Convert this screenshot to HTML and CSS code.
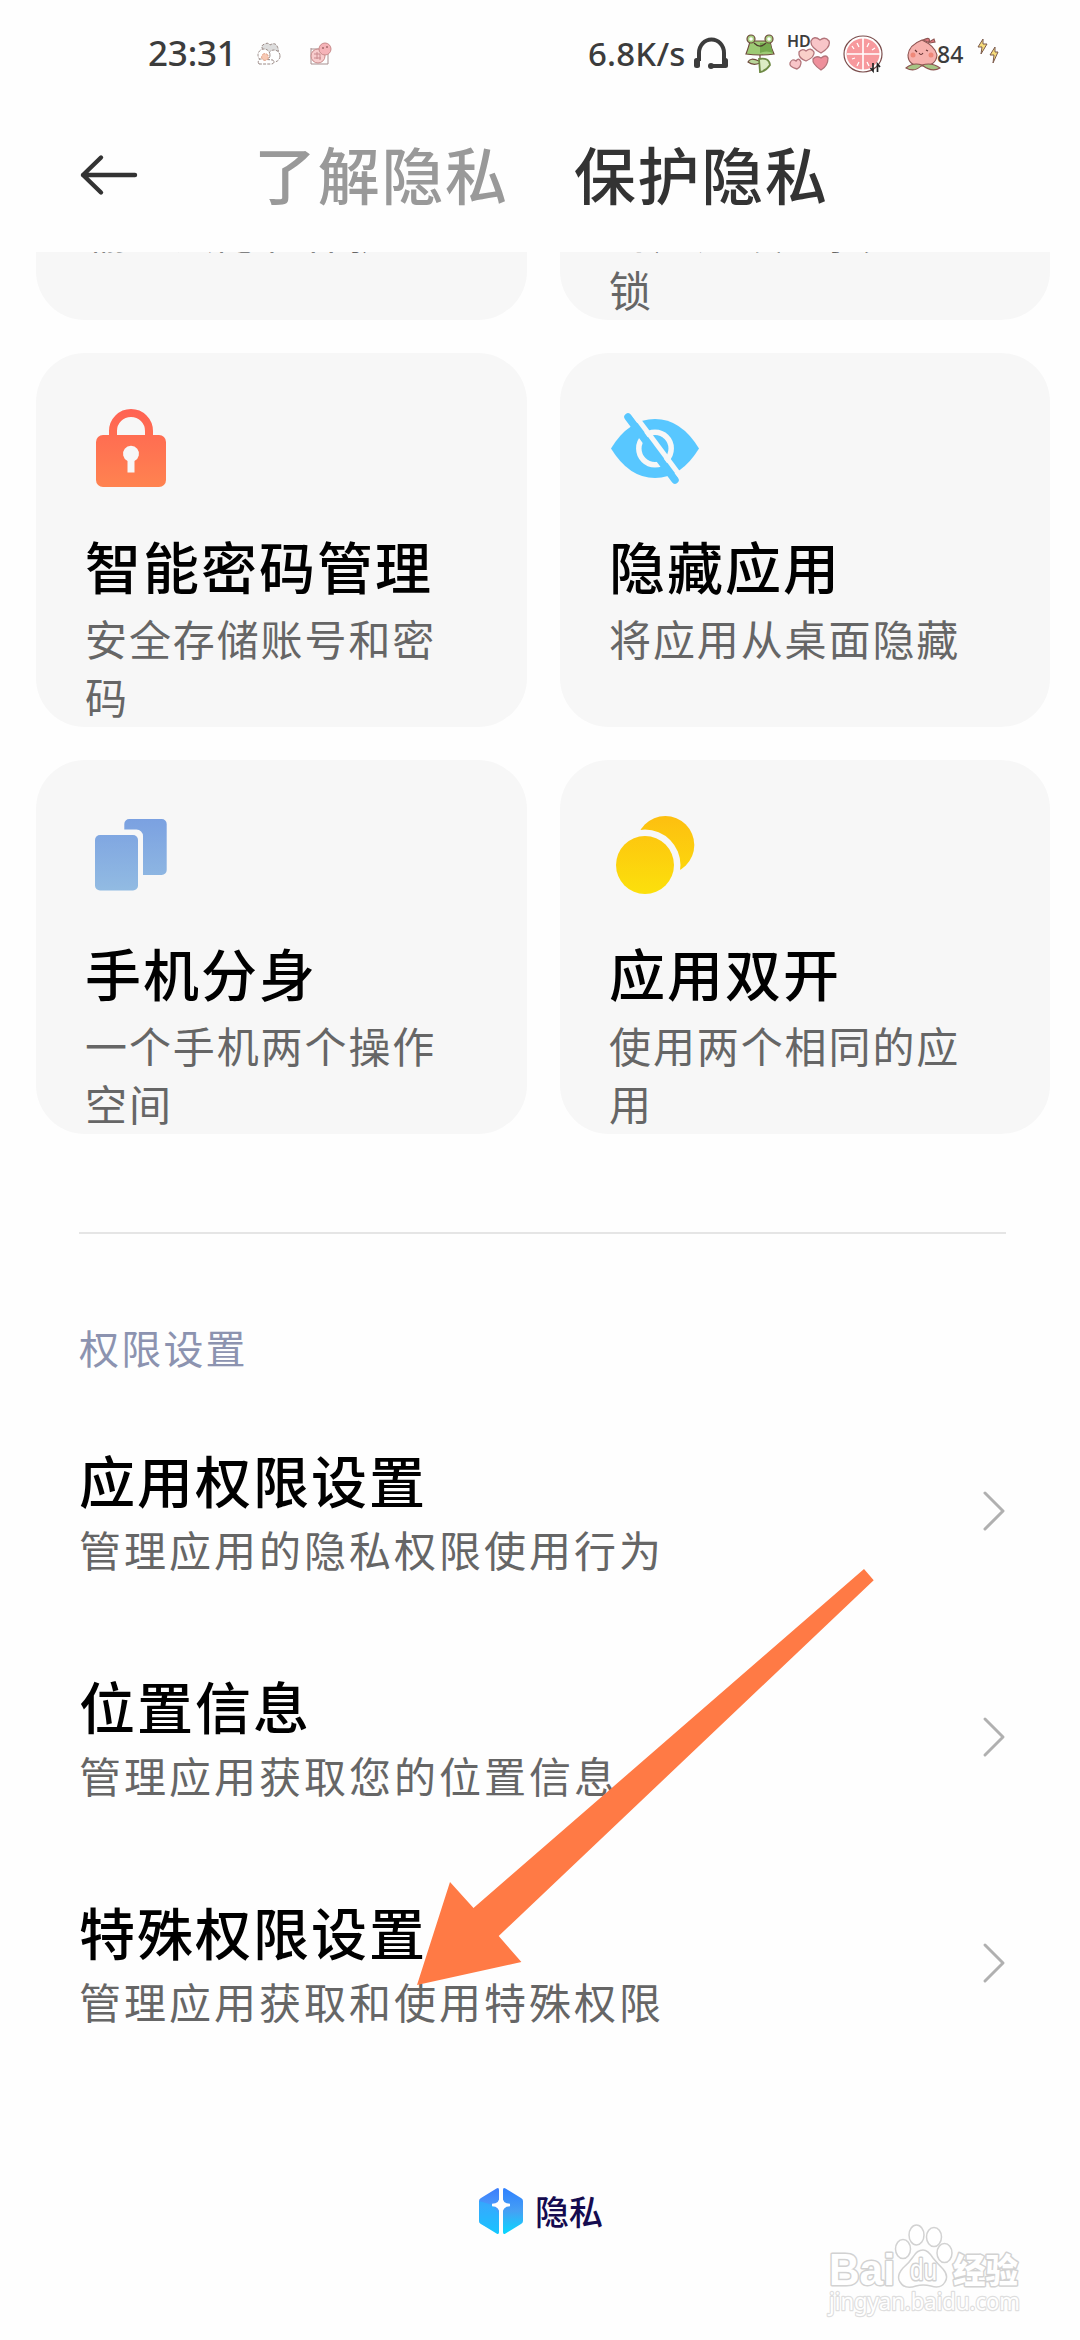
FILE: index.html
```html
<!DOCTYPE html>
<html lang="zh-CN">
<head>
<meta charset="utf-8">
<title>保护隐私</title>
<link rel="stylesheet" href="styles.css">
</head>
<body>
<div class="screen">
  <div class="statusbar">
    <span class="clock">23:31</span>
    <svg class="st-bear" width="24" height="24" viewBox="0 0 24 24" fill="#fff" stroke="#9a8a86" stroke-width="1" stroke-dasharray="3 1.2">
      <path d="M6 8Q3 3 8 2Q11 0 13 3Q18 0 20 4Q23 9 19 14L8 9Z" fill="#ddd"/>
      <circle cx="17" cy="14" r="6"/><circle cx="7" cy="13" r="6"/>
      <path d="M2 22Q0 19 3 17L16 18Q18 22 14 22Z"/>
      <circle cx="8" cy="15" r="3.4" fill="#f7c9b4" stroke="#e0a58d"/>
    </svg>
    <svg class="st-piggy" width="24" height="24" viewBox="0 0 24 24" fill="none" stroke="#c98b8b">
      <path d="M2 6V22H19V12M2 7H10" stroke="#a89090"/>
      <circle cx="9" cy="14" r="7" fill="#f8cccd"/><path d="M5 12H11M8 10V17M5 16H12M11 12V18" stroke="#c98a8e"/>
      <circle cx="16" cy="7" r="6" fill="#f5b3b8"/><path d="M13 6h2M17 5h2" stroke="#7d4545"/>
    </svg>
    <span class="speed">6.8K/s</span>
    <svg class="st-phones" width="36" height="34" viewBox="0 0 36 34" fill="none" stroke="#3c3c3c" stroke-width="4">
      <path d="M6 24V16a12.5 13.5 0 0 1 25 0V24M31 29H19"/>
      <rect x="1" y="21" width="6" height="10" rx="2.5" fill="#3c3c3c" stroke="none"/><rect x="29" y="21" width="6" height="10" rx="2.5" fill="#3c3c3c" stroke="none"/>
      <circle cx="18" cy="29" r="3" fill="#3c3c3c" stroke="none"/>
    </svg>
    <svg class="st-frog" width="31" height="40" viewBox="0 0 31 40" stroke="#6e4a3c" stroke-width="1.2">
      <path d="M15 19V37M14 27Q5 23 3 28Q8 32 15 29" fill="#b9d69a"/>
      <path d="M14 25Q24 23 25 31Q21 37 15 38Z" fill="#dcecc4" stroke="#6e8a45" stroke-width="1.8"/>
      <path d="M1 20Q4 12 5 7H25Q26 14 29 20Q15 22 1 20Z" fill="#9dca74"/>
      <path d="M15 9H25L28 19Q22 16 15 19Z" fill="#76a94e" stroke="none"/>
      <circle cx="6" cy="5" r="4" fill="#a9d182"/><circle cx="24" cy="5" r="4" fill="#a9d182"/>
      <circle cx="6" cy="5" r="1.8" fill="#fff" stroke="none"/><circle cx="24" cy="5" r="1.8" fill="#fff" stroke="none"/>
      <path d="M9 9Q15 15 21 9" fill="none" stroke="#4c3a2c"/>
    </svg>
    <span class="signal">
      <b class="hd">HD</b>
      <svg width="44" height="36" viewBox="0 0 44 36" fill="#f8c5c8" stroke="#b2747a" stroke-width="1.3">
        <path d="M33 17Q22 11 23 5Q26 -1 32 4Q37 0 41 5Q43 11 33 17Z"/>
        <path d="M18 25Q10 22 11 16Q14 12 18 15Q23 11 26 16Q27 21 18 25Z" fill="#f9d0c9"/>
        <path d="M9 33Q1 31 2 27Q4 22 8 25Q11 21 13 26Q13 31 9 33Z"/>
        <path d="M33 34Q24 28 25 23Q28 19 33 22Q38 18 40 22Q40 30 33 34Z" fill="#ee8f9b"/>
      </svg>
    </span>
    <svg class="st-fruit" width="41" height="39" viewBox="0 0 41 39">
      <ellipse cx="20" cy="19" rx="19" ry="18" fill="#fff" stroke="#7b4d4c" stroke-width="1.2"/>
      <ellipse cx="20" cy="19" rx="16.5" ry="15.5" fill="#f7999d"/>
      <path d="M20 3V35M4 19H37" stroke="#fff" stroke-width="1.6"/>
      <path d="M14 8l2 4M9 11l2 3M26 8l-2 4M32 13l-3 2M9 24l3-1M14 31l2-4M26 31l-2-4" stroke="#fff" stroke-width="1.3"/>
      <path d="M30 28V36L27.500 33M34.500 37V29L37 32" stroke="#222" stroke-width="1.7" fill="none"/>
    </svg>
    <span class="battery">
      <svg width="36" height="35" viewBox="0 0 36 35" stroke="#8d5451" stroke-width="1.1">
        <path d="M18 3Q26 -1 24 5L29 2L30 5L25 6Z" fill="#df7980"/>
        <path d="M17 29Q3 29 3 18Q4 8 17 3Q30 9 32 18Q31 29 17 29Z" fill="#f6b1ad"/>
        <path d="M17 28Q8 25 1 31Q10 36 17 28Q27 36 35 31Q27 25 17 28Z" fill="#a7c585"/>
        <circle cx="8" cy="18" r="2.5" fill="#ee8879" stroke="none"/><circle cx="26" cy="18" r="2.5" fill="#ee8879" stroke="none"/>
        <path d="M10 13l2 2M21 13l2 1M14 16q2 3 4 0" stroke="#633" fill="none"/>
      </svg>
      <b class="pct">84</b>
    </span>
    <svg class="st-bolt" width="22" height="26" viewBox="0 0 22 26" fill="#f6dc7b" stroke="#7b5a4e" stroke-width="1">
      <path d="M6 1L1 9H5L4 16L10 6H6Z"/><path d="M18 9L13 17H17L16 25L21 14H18Z"/>
    </svg>
  </div>

  <header class="topbar">
    <svg class="back" width="60" height="42" viewBox="0 0 60 42" fill="none" stroke="#333" stroke-width="4.4" stroke-linecap="round" stroke-linejoin="round"><path d="M56 21H4M22 3.500L4 21L22 38.500"/></svg>
    <nav class="tabs"><span class="tab">了解隐私</span><span class="tab tab-active">保护隐私</span></nav>
  </header>

  <main>
    <section class="grid">
      <div class="card card-cut"><p class="card-sub">输入法隐私保护<br>&nbsp;</p></div>
      <div class="card card-cut"><p class="card-sub">为应用设置独立的锁</p></div>

      <div class="card">
        <svg class="icon" viewBox="0 0 100 100">
          <defs><linearGradient id="lock" x1="0" y1="12" x2="0" y2="90" gradientUnits="userSpaceOnUse"><stop stop-color="#ff6253"/><stop offset="1" stop-color="#ff8350"/></linearGradient></defs>
          <path d="M28 42V34a18 18 0 0 1 36 0V42" fill="none" stroke="url(#lock)" stroke-width="8"/>
          <rect x="11" y="38" width="70" height="52" rx="7" fill="url(#lock)"/>
          <path d="M42.500 64a8 8 0 1 1 7 0V75.500H42.500Z" fill="#f7f7f7"/>
        </svg>
        <h2 class="card-title">智能密码管理</h2>
        <p class="card-sub">安全存储账号和密码</p>
      </div>
      <div class="card">
        <svg class="icon" viewBox="0 0 100 100">
          <path d="M2 51.500Q20 22 46 22T90 51.500Q72 81 46 81T2 51.500Z" fill="#58c7ff"/>
          <circle cx="46" cy="51.500" r="16.200" fill="none" stroke="#f7f7f7" stroke-width="5.500"/>
          <path d="M19 20L66 83" stroke="#58c7ff" stroke-width="7.500" stroke-linecap="round"/>
          <path d="M22 13L73 81.300" stroke="#f7f7f7" stroke-width="5"/>
        </svg>
        <h2 class="card-title">隐藏应用</h2>
        <p class="card-sub">将应用从桌面隐藏</p>
      </div>

      <div class="card">
        <svg class="icon" viewBox="0 0 100 100">
          <defs><linearGradient id="sheet" x1="0" y1="15" x2="0" y2="87" gradientUnits="userSpaceOnUse"><stop stop-color="#7ba1e1"/><stop offset="1" stop-color="#92bbe2"/></linearGradient></defs>
          <rect x="10" y="31" width="43" height="55.500" rx="5" fill="url(#sheet)"/>
          <path d="M39.300 25.500V20a5 5 0 0 1 5-5H76.700a5 5 0 0 1 5 5V66a5 5 0 0 1-5 5H58V32a6.500 6.500 0 0 0-6.500-6.500Z" fill="url(#sheet)"/>
        </svg>
        <h2 class="card-title">手机分身</h2>
        <p class="card-sub">一个手机两个操作空间</p>
      </div>
      <div class="card">
        <svg class="icon" viewBox="0 0 100 100">
          <defs><linearGradient id="coin" x1="0" y1="12" x2="0" y2="90" gradientUnits="userSpaceOnUse"><stop stop-color="#fdbf10"/><stop offset="1" stop-color="#fce00c"/></linearGradient></defs>
          <circle cx="56.300" cy="41" r="29" fill="url(#coin)"/>
          <circle cx="36" cy="61" r="35.500" fill="#f7f7f7"/>
          <circle cx="36" cy="61" r="29" fill="url(#coin)"/>
        </svg>
        <h2 class="card-title">应用双开</h2>
        <p class="card-sub">使用两个相同的应用</p>
      </div>
    </section>

    <section class="settings">
      <h3 class="label">权限设置</h3>
      <div class="row">
        <div><h2 class="row-title">应用权限设置</h2><p class="row-sub">管理应用的隐私权限使用行为</p></div>
        <svg class="chev" viewBox="0 0 24 42"><path d="M3 3L21 21L3 39"/></svg>
      </div>
      <div class="row">
        <div><h2 class="row-title">位置信息</h2><p class="row-sub">管理应用获取您的位置信息</p></div>
        <svg class="chev" viewBox="0 0 24 42"><path d="M3 3L21 21L3 39"/></svg>
      </div>
      <div class="row">
        <div><h2 class="row-title">特殊权限设置</h2><p class="row-sub">管理应用获取和使用特殊权限</p></div>
        <svg class="chev" viewBox="0 0 24 42"><path d="M3 3L21 21L3 39"/></svg>
      </div>
    </section>
  </main>

  <footer class="brand">
    <svg width="44" height="48" viewBox="0 0 44 48">
      <defs>
        <linearGradient id="hex" x1="0" y1="0" x2="0" y2="1"><stop stop-color="#3d7dfa"/><stop offset=".4" stop-color="#4a9afb"/><stop offset="1" stop-color="#10ccff"/></linearGradient>
        <linearGradient id="hexr" x1="0" y1="0" x2="0" y2="1"><stop stop-color="#2f80ff"/><stop offset=".5" stop-color="#46a0f4"/><stop offset="1" stop-color="#08d8ff"/></linearGradient>
      </defs>
      <path d="M17.500 1.500Q20 0 20 3V45Q20 48 17.500 46.500L2 37Q0 36 0 34V14Q0 12 2 11Z" fill="url(#hex)"/>
      <path d="M26.500 1.500Q24 0 24 3V45Q24 48 26.500 46.500L42 37Q44 36 44 34V14Q44 12 42 11Z" fill="url(#hexr)"/>
      <path d="M0 14L14 18L20 28V46L2 37Q0 36 0 34Z" fill="#1fbcff" opacity=".5"/>
      <path d="M22 9Q22 18 31 18Q22 18 22 28Q22 18 13 18Q22 18 22 9Z" fill="#fff" stroke="#fff" stroke-width="2.500"/>
    </svg>
    <span>隐私</span>
  </footer>

  <svg class="pointer" width="457" height="416" viewBox="0 0 457 416"><path d="M447 0L456.700 11.300L81.700 367L104.400 393L0 416L33 313L56.500 339Z" fill="#ff7a45"/></svg>

  <svg class="watermark" width="210" height="100" viewBox="0 0 210 100">
    <g class="wm-ink">
      <text class="wm-bai" x="3" y="61" textLength="66" lengthAdjust="spacingAndGlyphs">Bai</text>
      <path d="M97 26Q102 26 107 34Q111 39 117 45Q123 52 119 58Q115 65 105 62Q97 60 90 62Q79 66 74 58Q70 52 77 44Q83 39 87 33Q91 26 97 26Z"/>
      <ellipse cx="77" cy="25" rx="7.500" ry="9.500"/><ellipse cx="90.500" cy="11" rx="7.500" ry="10"/><ellipse cx="108" cy="13" rx="7.500" ry="9.500"/><ellipse cx="118.500" cy="29" rx="7.500" ry="9.500"/>
      <text class="wm-du" x="84" y="56" textLength="27" lengthAdjust="spacingAndGlyphs">du</text>
      <text class="wm-cjk" x="127" y="59" textLength="65" lengthAdjust="spacingAndGlyphs">经验</text>
      <text class="wm-url" x="3" y="86" textLength="191" lengthAdjust="spacingAndGlyphs">jingyan.baidu.com</text>
    </g>
  </svg>
</div>
</body>
</html>
```
FILE: styles.css
```css
* { box-sizing: border-box; margin: 0; padding: 0; }
body { background: #fdfdfd; }
svg { display: block; flex: none; }
.screen {
  position: relative;
  width: 1080px;
  height: 2340px;
  overflow: hidden;
  display: flex;
  flex-direction: column;
  background: #fefefe;
  color: #000;
  font-family: "Noto Sans CJK SC", "Noto Sans", sans-serif;
}

.statusbar {
  height: 108px;
  padding-left: 148px;
  display: flex;
  align-items: center;
  color: #3c3c3c;
  font-family: "Noto Sans", "Open Sans", sans-serif;
  font-weight: 500;
}
.clock { width: 88px; font-size: 35px; line-height: 48px; padding-bottom: 2px; white-space: nowrap; letter-spacing: -.2px; }
.st-bear { margin-left: 21px; }
.st-piggy { margin-left: 28px; }
.speed { width: 100px; margin-left: 255px; font-size: 33px; line-height: 48px; padding-bottom: 1px; white-space: nowrap; letter-spacing: .2px; }
.st-phones { margin-left: 5px; }
.st-frog { margin-left: 16px; }
.signal { position: relative; margin-left: 12px; }
.hd { position: absolute; left: -1px; top: -4px; font-size: 16px; line-height: 18px; font-weight: 600; z-index: 1; }
.st-fruit { margin-left: 11px; }
.battery { margin-left: 21px; display: flex; align-items: center; }
.pct { font-size: 23px; line-height: 30px; font-weight: 500; margin-left: -4px; }
.st-bolt { margin-left: 14px; margin-top: -6px; }

.topbar {
  height: 144px;
  padding-left: 79px;
  display: flex;
  align-items: flex-start;
}
.back { margin-top: 46px; }
.tabs { display: flex; gap: 65px; margin-left: 115px; padding-top: 30px; }
.tab { font-size: 62px; line-height: 70px; letter-spacing: 1.700px; color: #999; font-weight: 500; white-space: nowrap; }
.tab-active { color: #333; }

.grid {
  display: grid;
  grid-template-columns: 491px 490px;
  grid-template-rows: 68px 374px 374px;
  gap: 33px;
  padding-left: 36px;
}
.card {
  padding: 44px 49px 0;
  border-radius: 49px;
  background: #f7f7f7;
  overflow: hidden;
}
.card-cut {
  display: flex;
  flex-direction: column;
  justify-content: flex-end;
  padding: 0 49px 2px;
  border-radius: 0 0 49px 49px;
}
.icon { width: 100px; height: 100px; }
.card-title, .row-title {
  font-size: 56px;
  line-height: 76px;
  font-weight: 500;
  letter-spacing: 2px;
  white-space: nowrap;
}
.card-title { margin-top: 30px; margin-bottom: 6px; }
.card-sub {
  width: 360px;
  font-size: 42px;
  line-height: 58px;
  letter-spacing: 1.900px;
  color: #666;
}

.settings { margin: 98px 74px 0 79px; border-top: 2px solid #e5e5e5; }
.label {
  margin-top: 84px;
  font-size: 40px;
  line-height: 58px;
  letter-spacing: 2.200px;
  font-weight: 400;
  color: #8c93b0;
}
.row {
  height: 226px;
  display: flex;
  align-items: center;
  justify-content: space-between;
}
.row:first-of-type { margin-top: 22px; }
.row-title { margin-top: -3px; margin-bottom: 3px; }
.row-sub { font-size: 42px; line-height: 58px; letter-spacing: 3px; color: #666; white-space: nowrap; }
.chev { width: 24px; height: 42px; fill: none; stroke: #b0b0b0; stroke-width: 3; stroke-linecap: round; stroke-linejoin: round; }

.brand {
  margin-top: 111px;
  padding-left: 479px;
  display: flex;
  align-items: center;
  gap: 12px;
  font-size: 34px;
  line-height: 48px;
  font-weight: 500;
  color: #150b50;
}

.pointer { position: absolute; left: 417px; top: 1569px; }
.watermark { position: absolute; left: 826px; top: 2224px; }
.wm-ink { fill: #fff; stroke: #d2d2d2; stroke-width: 1.500px; }
.wm-ink text { paint-order: stroke; stroke-width: 3px; stroke-linejoin: round; }
.wm-bai { font: 700 44px "Liberation Sans", sans-serif; }
.wm-du { font: 400 30px "Liberation Sans", sans-serif; }
.wm-cjk { font: 900 34px "Noto Sans CJK SC", sans-serif; }
.wm-ink .wm-url { font: 400 24px "Noto Sans", sans-serif; stroke: #dedede; stroke-width: 2.500px; }
```
